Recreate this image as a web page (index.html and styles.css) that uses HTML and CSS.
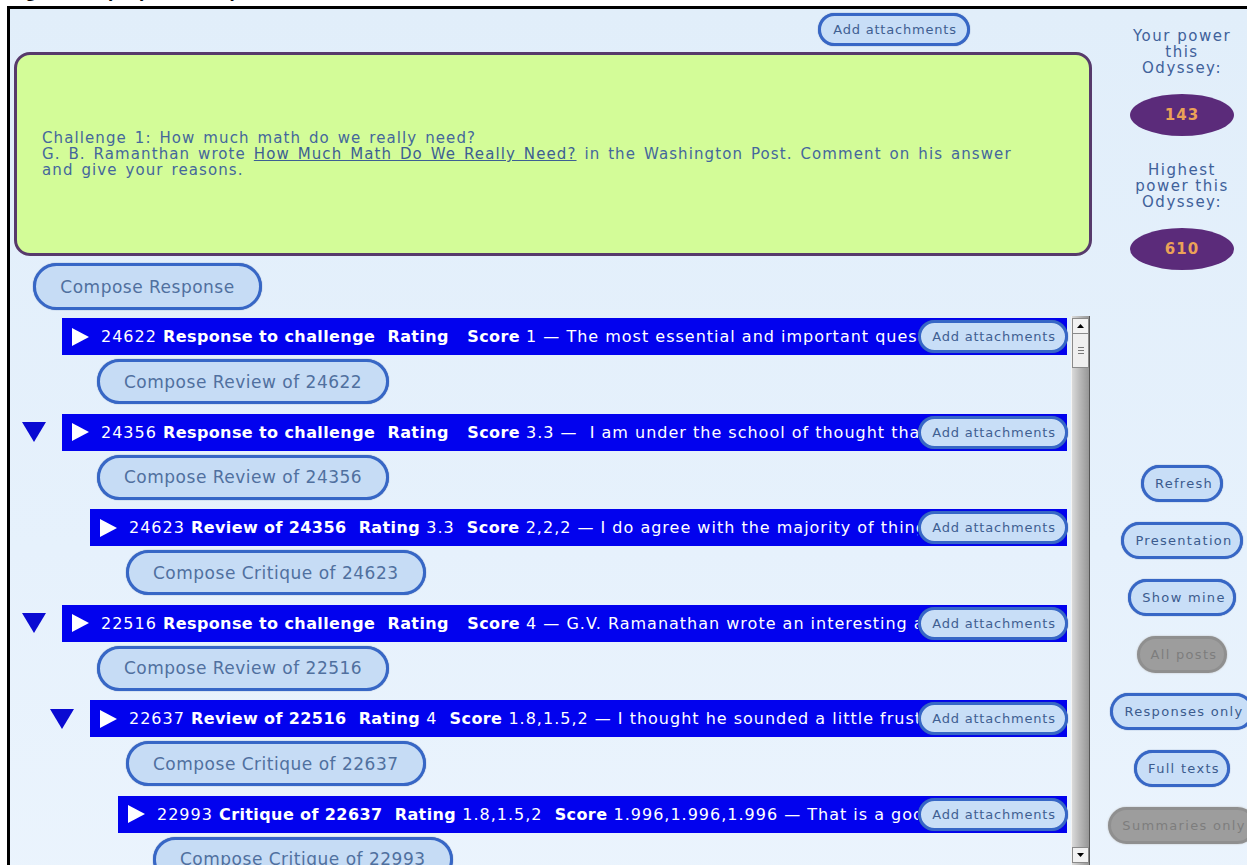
FILE: index.html
```html
<!DOCTYPE html>
<html lang="en">
<head>
<meta charset="utf-8">
<title>Odyssey Screen Layout</title>
<link rel="stylesheet" href="styles.css">
</head>
<body>
<p class="caption"><span>Figure 3: Odyssey Screen Layout</span></p>
<div class="frame">
  <div class="main">
    <div class="topbar"><button class="pill pill-sm">Add attachments</button></div>

    <div class="challenge">
      <p>Challenge 1: How much math do we really need?<br>
      G. B. Ramanthan wrote <a href="#">How Much Math Do We Really Need?</a> in the Washington Post. Comment on his answer and give your reasons.</p>
    </div>

    <div class="compose-top"><button class="pill pill-lg">Compose Response</button></div>

    <div class="thread">
      <div class="posts">
        <div class="post lv0">
          <span class="toggle"></span>
          <div class="bar">
            <svg class="play" width="17" height="18" viewBox="0 0 17 18"><polygon points="0,0 17,9 0,18" fill="#fff"/></svg>
            <span class="summary">24622 <b>Response to challenge</b>&nbsp; <b>Rating</b>&nbsp;&nbsp; <b>Score</b> 1 — The most essential and important question that we have to ask ourselves is what the students will use</span>
            <button class="pill pill-sm pill-bar">Add attachments</button>
          </div>
        </div>
        <div class="compose lv0"><button class="pill pill-lg">Compose Review of 24622</button></div>

        <div class="post lv0">
          <span class="toggle"><svg width="24" height="20" viewBox="0 0 24 20"><polygon points="0,0 24,0 12,20" fill="#0a0ad2"/></svg></span>
          <div class="bar">
            <svg class="play" width="17" height="18" viewBox="0 0 17 18"><polygon points="0,0 17,9 0,18" fill="#fff"/></svg>
            <span class="summary">24356 <b>Response to challenge</b>&nbsp; <b>Rating</b>&nbsp;&nbsp; <b>Score</b> 3.3 —&nbsp; I am under the school of thought that every student should learn math up to algebra</span>
            <button class="pill pill-sm pill-bar">Add attachments</button>
          </div>
        </div>
        <div class="compose lv0"><button class="pill pill-lg">Compose Review of 24356</button></div>

        <div class="post lv1">
          <span class="toggle"></span>
          <div class="bar">
            <svg class="play" width="17" height="18" viewBox="0 0 17 18"><polygon points="0,0 17,9 0,18" fill="#fff"/></svg>
            <span class="summary">24623 <b>Review of 24356</b>&nbsp; <b>Rating</b> 3.3&nbsp; <b>Score</b> 2,2,2 — I do agree with the majority of things that were said in this response</span>
            <button class="pill pill-sm pill-bar">Add attachments</button>
          </div>
        </div>
        <div class="compose lv1"><button class="pill pill-lg">Compose Critique of 24623</button></div>

        <div class="post lv0">
          <span class="toggle"><svg width="24" height="20" viewBox="0 0 24 20"><polygon points="0,0 24,0 12,20" fill="#0a0ad2"/></svg></span>
          <div class="bar">
            <svg class="play" width="17" height="18" viewBox="0 0 17 18"><polygon points="0,0 17,9 0,18" fill="#fff"/></svg>
            <span class="summary">22516 <b>Response to challenge</b>&nbsp; <b>Rating</b>&nbsp;&nbsp; <b>Score</b> 4 — G.V. Ramanathan wrote an interesting article about how much math we need</span>
            <button class="pill pill-sm pill-bar">Add attachments</button>
          </div>
        </div>
        <div class="compose lv0"><button class="pill pill-lg">Compose Review of 22516</button></div>

        <div class="post lv1">
          <span class="toggle"><svg width="24" height="20" viewBox="0 0 24 20"><polygon points="0,0 24,0 12,20" fill="#0a0ad2"/></svg></span>
          <div class="bar">
            <svg class="play" width="17" height="18" viewBox="0 0 17 18"><polygon points="0,0 17,9 0,18" fill="#fff"/></svg>
            <span class="summary">22637 <b>Review of 22516</b>&nbsp; <b>Rating</b> 4&nbsp; <b>Score</b> 1.8,1.5,2 — I thought he sounded a little frustrated with the way math is taught</span>
            <button class="pill pill-sm pill-bar">Add attachments</button>
          </div>
        </div>
        <div class="compose lv1"><button class="pill pill-lg">Compose Critique of 22637</button></div>

        <div class="post lv2">
          <span class="toggle"></span>
          <div class="bar">
            <svg class="play" width="17" height="18" viewBox="0 0 17 18"><polygon points="0,0 17,9 0,18" fill="#fff"/></svg>
            <span class="summary">22993 <b>Critique of 22637</b>&nbsp; <b>Rating</b> 1.8,1.5,2&nbsp; <b>Score</b> 1.996,1.996,1.996 — That is a good point about the article</span>
            <button class="pill pill-sm pill-bar">Add attachments</button>
          </div>
        </div>
        <div class="compose lv2"><button class="pill pill-lg">Compose Critique of 22993</button></div>
      </div>

      <div class="scrollbar">
        <div class="sb-btn"><svg width="7" height="4" viewBox="0 0 7 4"><polygon points="0,4 7,4 3.5,0" fill="#000"/></svg></div>
        <div class="sb-thumb"><i></i><i></i><i></i></div>
        <div class="sb-track"></div>
        <div class="sb-btn"><svg width="7" height="4" viewBox="0 0 7 4"><polygon points="0,0 7,0 3.5,4" fill="#000"/></svg></div>
      </div>
    </div>
  </div>

  <aside class="side">
    <div class="stat-label">Your power this Odyssey:</div>
    <div class="stat-value">143</div>
    <div class="stat-label stat-gap">Highest power this Odyssey:</div>
    <div class="stat-value">610</div>

    <div class="controls">
      <button class="pill pill-side">Refresh</button>
      <button class="pill pill-side">Presentation</button>
      <button class="pill pill-side">Show mine</button>
      <button class="pill pill-side pill-off">All posts</button>
      <button class="pill pill-side">Responses only</button>
      <button class="pill pill-side">Full texts</button>
      <button class="pill pill-side pill-off">Summaries only</button>
    </div>
  </aside>
</div>
</body>
</html>
```

FILE: styles.css
```css
html, body {
  margin: 0;
  padding: 0;
  background: #fff;
  overflow: hidden;
}

body {
  width: 1247px;
  height: 865px;
}

/* figure caption, only its lower edge shows above the frame */
.caption {
  margin: 0;
  height: 6px;
  overflow: hidden;
  padding-left: 10px;
  font: bold 18px "Liberation Serif", serif;
  color: #000;
}
.caption span {
  display: block;
  margin-top: -18px;
  line-height: 18px;
  white-space: nowrap;
}

.frame {
  margin-left: 7px;
  width: 1270px;
  height: 900px;
  border: 3px solid #000;
  display: flex;
  background: linear-gradient(#e1eefa, #e6f1fc 60%, #ebf4fd);
  font-family: "DejaVu Sans", Verdana, sans-serif;
}

.main {
  width: 1082px;
  flex: none;
  display: flex;
  flex-direction: column;
}

/* rounded buttons */
.pill {
  display: inline-flex;
  align-items: center;
  justify-content: center;
  box-sizing: border-box;
  border: 3px solid #3767c6;
  background: #c8def7;
  color: #3f5f92;
  font-family: "DejaVu Sans", Verdana, sans-serif;
  white-space: nowrap;
  margin: 0;
  cursor: pointer;
  box-shadow: 0 0 1px #2c4f9a;
}

.pill-sm {
  height: 33px;
  border-radius: 17px;
  padding: 0 6px 0 8px;
  font-size: 13px;
  letter-spacing: 0.8px;
}

.pill-lg {
  height: 45px;
  border-radius: 23px;
  padding: 0 24px;
  font-size: 17px;
  letter-spacing: 0.5px;
  color: #50709f;
  background: #c6dcf5;
}

.topbar {
  padding: 4px 0 0 808px;
  height: 33px;
}
.topbar .pill {
  width: 152px;
}

.challenge {
  margin: 6px 0 0 4px;
  width: 1078px;
  height: 204px;
  box-sizing: border-box;
  border: 3px solid #573a6b;
  border-radius: 16px;
  background: #d3fc98;
  display: flex;
  align-items: center;
  padding: 0 40px 0 25px;
  color: #44679c;
  font-size: 15px;
  letter-spacing: 1.1px;
  word-spacing: 2px;
  line-height: 16px;
}
.challenge p {
  margin: 0;
}
.challenge a {
  color: #3d5f93;
  text-decoration: underline;
}

.compose-top {
  margin-top: 7px;
  padding-left: 23px;
}
.compose-top .pill {
  height: 47px;
  width: 229px;
  border-radius: 24px;
}

/* thread list with its scrollbar */
.thread {
  margin-top: 6px;
  height: 549px;
  display: flex;
}

.posts {
  flex: 1;
  min-width: 0;
  overflow: hidden;
  padding-top: 2px;
}

.post {
  display: flex;
  align-items: center;
  margin-bottom: 4px;
}
.post.lv0 { padding-left: 12px; }
.post.lv1 { padding-left: 40px; }
.post.lv2 { padding-left: 68px; }

.toggle {
  width: 24px;
  height: 20px;
  margin-right: 16px;
  flex: none;
  display: flex;
}

.bar {
  flex: 1;
  min-width: 0;
  height: 37px;
  margin-right: 4px;
  box-sizing: border-box;
  background: #0202ee;
  display: flex;
  align-items: center;
  padding-left: 10px;
  color: #fff;
  font-size: 16px;
  letter-spacing: 1px;
}
.bar .play {
  flex: none;
  margin-right: 12px;
}
.summary {
  flex: 1;
  min-width: 0;
  overflow: hidden;
  white-space: nowrap;
}
.summary b {
  font-weight: bold;
  letter-spacing: 0.4px;
}
.pill-bar {
  flex: none;
  width: 150px;
  margin-right: -1px;
  letter-spacing: 0.8px;
}

.compose {
  margin-bottom: 9.5px;
}
.compose.lv0 { padding-left: 87px; }
.compose.lv1 { padding-left: 116px; }
.compose.lv2 { padding-left: 143px; }
.compose .pill {
  min-width: 288px;
}

.scrollbar {
  width: 17px;
  flex: none;
  margin-right: 2px;
  display: flex;
  flex-direction: column;
  background: linear-gradient(to right, #dadada, #b9b9b9 45%, #969696);
  border-left: 1px solid #f4f4f4;
  border-right: 1px solid #555;
}
.sb-btn {
  height: 16px;
  box-sizing: border-box;
  background: #f2f2f2;
  border: 1px solid #8a8a8a;
  display: flex;
  align-items: center;
  justify-content: center;
}
.sb-btn:first-child {
  margin-top: 2px;
}
.sb-btn:last-child {
  margin-bottom: 2px;
}
.sb-thumb {
  height: 34px;
  box-sizing: border-box;
  background: #efefef;
  border: 1px solid #8a8a8a;
  border-top: none;
  display: flex;
  flex-direction: column;
  align-items: center;
  justify-content: center;
  gap: 2px;
}
.sb-thumb i {
  display: block;
  width: 6px;
  height: 1px;
  background: #777;
}
.sb-track {
  flex: 1;
}

/* right-hand column */
.side {
  width: 180px;
  flex: none;
  display: flex;
  flex-direction: column;
  align-items: center;
  padding-top: 19px;
  color: #40619a;
  font-size: 15px;
  letter-spacing: 1.5px;
  line-height: 16px;
  text-align: center;
}
.stat-label {
  width: 112px;
}
.stat-gap {
  margin-top: 26px;
}
.stat-value {
  width: 104px;
  height: 42px;
  margin-top: 18px;
  border-radius: 50%;
  background: #5b2b7a;
  color: #eba257;
  font-weight: bold;
  font-size: 15px;
  letter-spacing: 1px;
  display: flex;
  align-items: center;
  justify-content: center;
}

.controls {
  margin-top: 195px;
  display: flex;
  flex-direction: column;
  align-items: center;
  gap: 20px;
}
.pill-side {
  height: 37px;
  border-radius: 19px;
  padding: 0 7px 0 11px;
  font-size: 13px;
  letter-spacing: 1.3px;
  color: #3b5b8e;
}
.pill-off {
  background: #9d9d9d;
  border-color: #8f8f8f;
  color: #7d7d7d;
  box-shadow: 0 0 2px #bbb;
}
```
